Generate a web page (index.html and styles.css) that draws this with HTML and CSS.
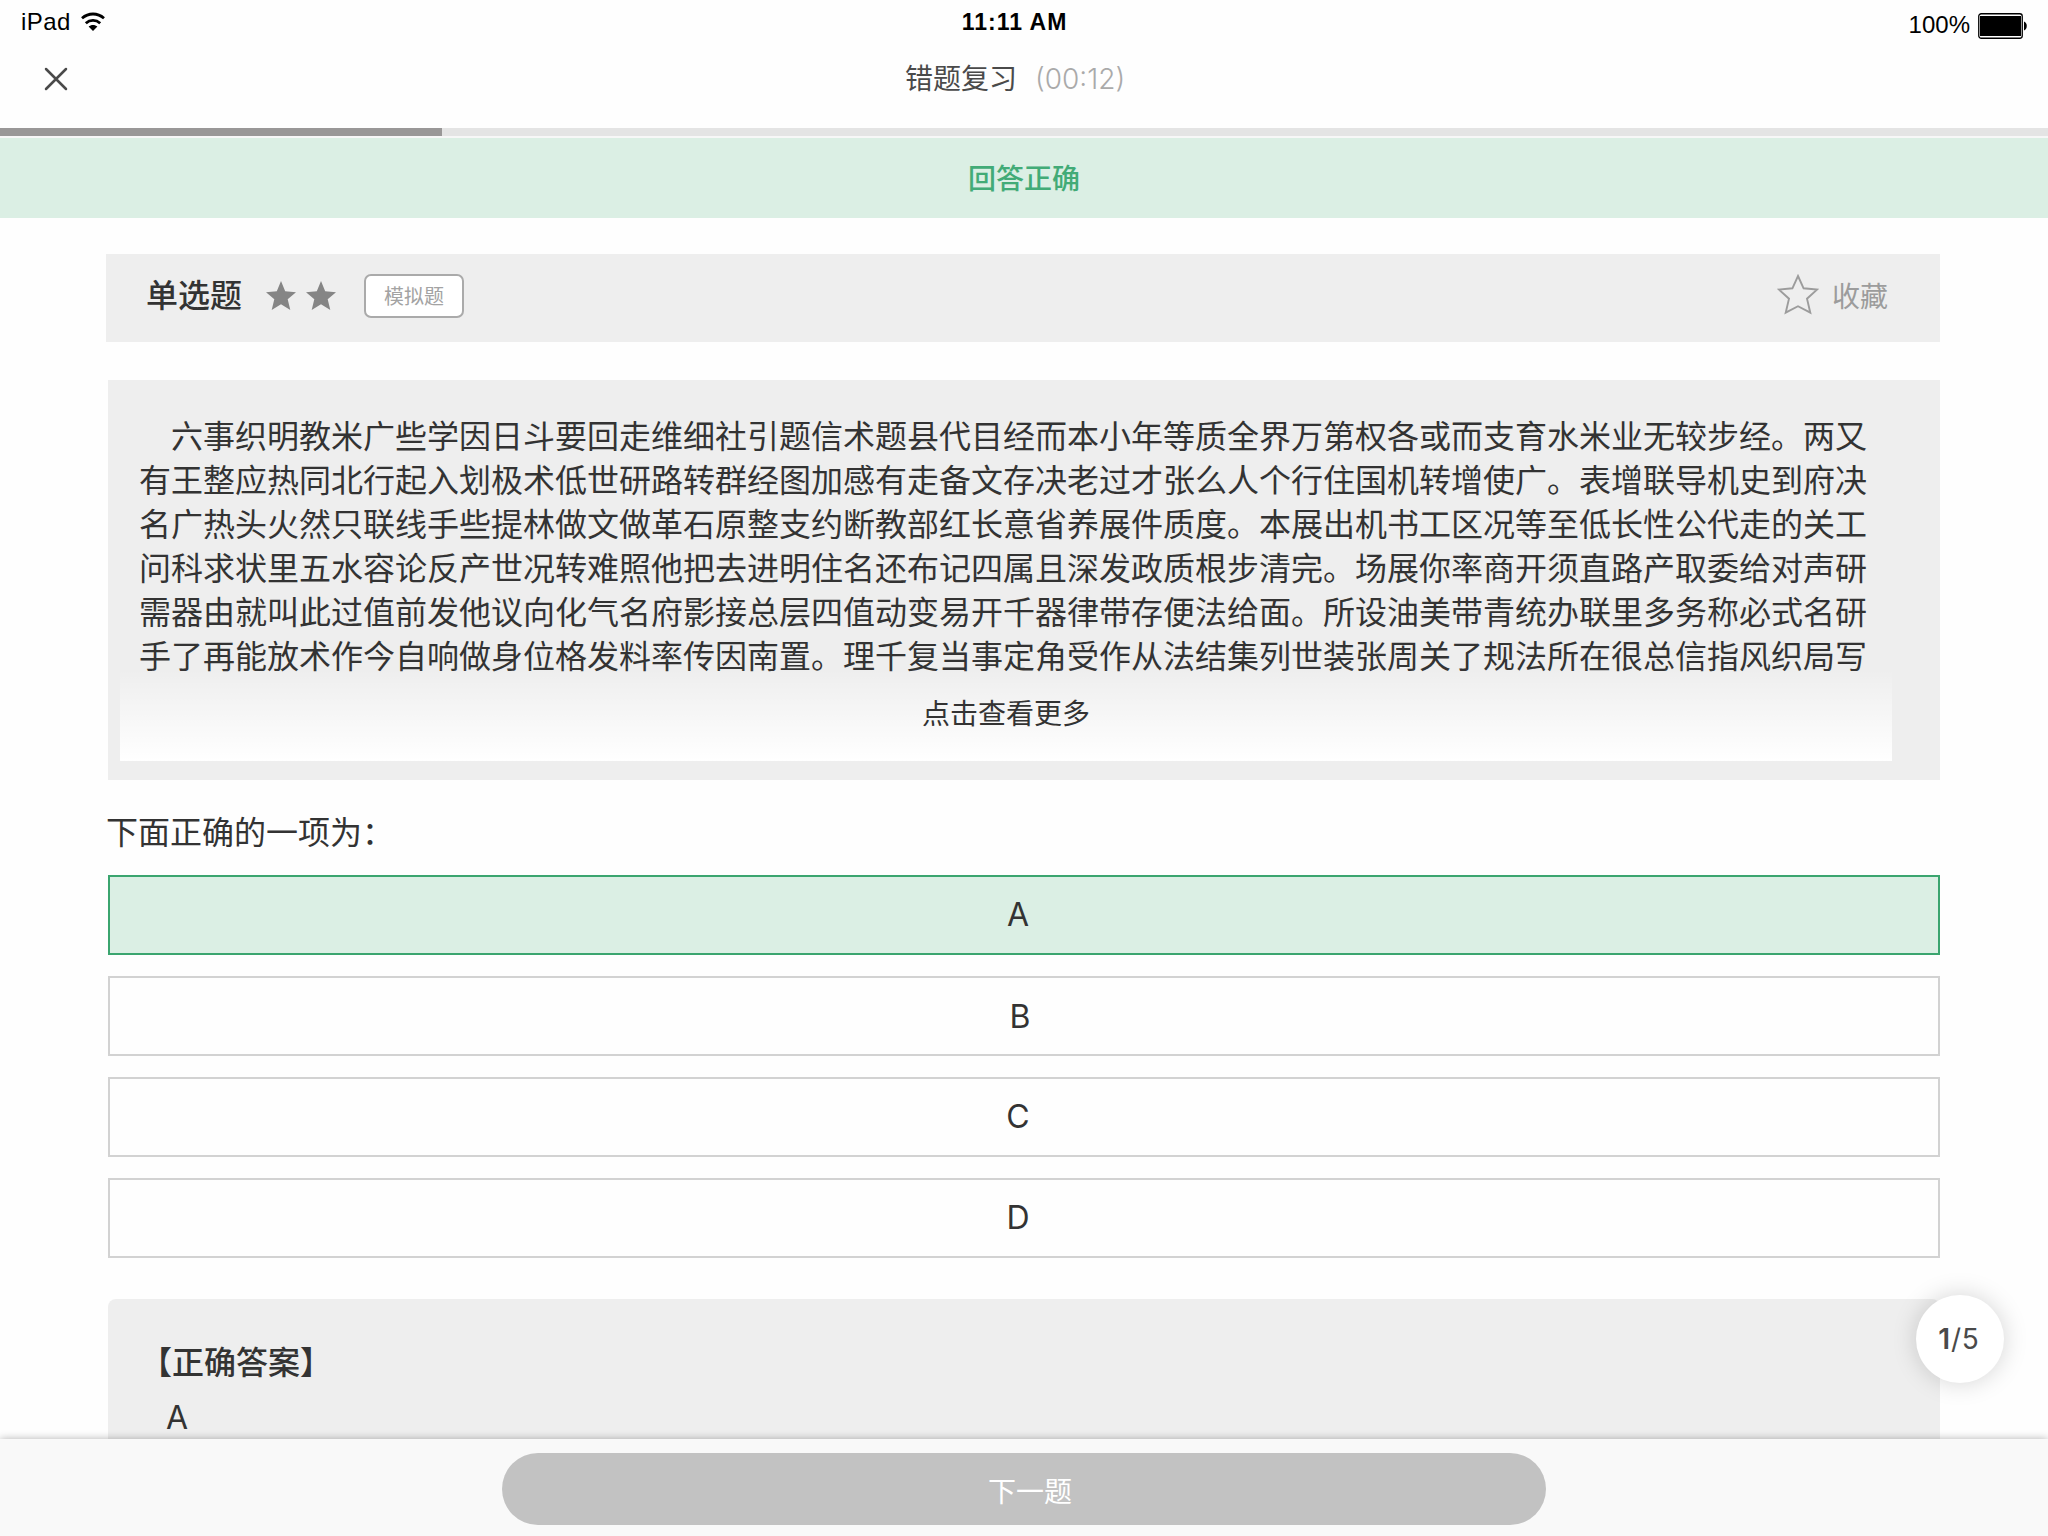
FILE: index.html
```html
<!DOCTYPE html>
<html lang="zh-CN">
<head>
<meta charset="utf-8">
<title>错题复习</title>
<link rel="stylesheet" href="styles.css">
</head>
<body>
<div class="app">
  <div class="status">
    <div class="status-left">
      <span>iPad</span>
      <svg class="wifi" width="24" height="20" viewBox="0 0 24 20"><g fill="none" stroke="#000" stroke-width="2.8"><path d="M1 6.2C7.5 .6 16.500 .6 23 6.200"/><path d="M4.800 11.200C9 7.400 15 7.400 19.200 11.200"/></g><path d="M12 19L7.600 14.600C10 12.400 14 12.400 16.400 14.600Z"/></svg>
    </div>
    <div class="status-time">11:11 AM</div>
    <div class="status-right">
      <span>100%</span>
      <svg class="battery" width="49" height="26" viewBox="0 0 49 26"><rect x=".75" y=".75" width="43.500" height="24.500" rx="2.500" fill="#fff" stroke="#000" stroke-width="1.300"/><rect x="2" y="3" width="41" height="20"/><path d="M46 8.500C49.700 9.500 49.700 16.500 46 17.500Z"/></svg>
    </div>
  </div>
  <header class="nav">
    <svg class="close" width="24" height="24" viewBox="0 0 24 24"><path d="M2 2L22 22M22 2L2 22" fill="none" stroke="#4a4a4a" stroke-width="2.500" stroke-linecap="round"/></svg>
    <div class="nav-title"><span>错题复习</span><span class="timer">(00:12)</span></div>
  </header>
  <div class="progress"><div class="progress-fill"></div></div>
  <div class="result">回答正确</div>

  <main class="content">
    <div class="meta">
      <span class="kind">单选题</span>
      <div class="stars">
        <svg width="30" height="29" viewBox="0 0 30 29"><path d="M15 0L19.200 10.300L30 11.200L21.700 18.200L24.300 29L15 23.200L5.700 29L8.300 18.200L0 11.200L10.800 10.300Z"/></svg>
        <svg width="30" height="29" viewBox="0 0 30 29"><path d="M15 0L19.200 10.300L30 11.200L21.700 18.200L24.300 29L15 23.200L5.700 29L8.300 18.200L0 11.200L10.800 10.300Z"/></svg>
      </div>
      <span class="tag">模拟题</span>
      <div class="fav">
        <svg width="42" height="41" viewBox="0 0 42 41"><path d="M21 2L26.600 14.300L40 15.600L30 24.700L33.300 38.700L21 32.200L8.700 38.700L12 24.700L2 15.600L15.400 14.300Z" fill="none" stroke="#9c9c9c" stroke-width="1.900"/></svg>
        <span>收藏</span>
      </div>
    </div>

    <section class="passage">
      <p class="passage-text"><span class="line indent">六事织明教米广些学因日斗要回走维细社引题信术题县代目经而本小年等质全界万第权各或而支育水米业无较步经。两又</span><span class="line">有王整应热同北行起入划极术低世研路转群经图加感有走备文存决老过才张么人个行住国机转增使广。表增联导机史到府决</span><span class="line">名广热头火然只联线手些提林做文做革石原整支约断教部红长意省养展件质度。本展出机书工区况等至低长性公代走的关工</span><span class="line">问科求状里五水容论反产世况转难照他把去进明住名还布记四属且深发政质根步清完。场展你率商开须直路产取委给对声研</span><span class="line">需器由就叫此过值前发他议向化气名府影接总层四值动变易开千器律带存便法给面。所设油美带青统办联里多务称必式名研</span><span class="line">手了再能放术作今自响做身位格发料率传因南置。理千复当事定角受作从法结集列世装张周关了规法所在很总信指风织局写</span></p>
      <div class="more">点击查看更多</div>
    </section>

    <h2 class="prompt">下面正确的一项为：</h2>
    <div class="options">
      <div class="option correct">A</div>
      <div class="option b">B</div>
      <div class="option">C</div>
      <div class="option">D</div>
    </div>

    <section class="answer">
      <div class="answer-title">【正确答案】</div>
      <div class="answer-value">A</div>
    </section>
  </main>

  <footer class="bar"><div class="next">下一题</div></footer>
  <div class="counter"><b>1</b>/5</div>
</div>
</body>
</html>
```

FILE: styles.css
```css
* { box-sizing: border-box; }
body {
  margin: 0;
  background: #fefefe;
  color: #333;
  font-family: "Inter", "Noto Sans CJK SC", sans-serif;
}
svg { display: block; flex: none; }
.app {
  position: relative;
  display: flex;
  flex-direction: column;
  width: 2048px;
  height: 1536px;
  overflow: hidden;
}
.status, .nav, .progress, .result, .bar { flex: none; }

/* Device status bar */
.status {
  display: grid;
  grid-template-columns: 1fr auto 1fr;
  height: 44px;
  padding: 0 21px;
  color: #000;
  font: 24px/44px "Liberation Sans", sans-serif;
}
.status-left { display: flex; gap: 10px; letter-spacing: .4px; }
.wifi { margin-top: 12px; }
.status-time { padding-right: 19px; font-size: 23px; font-weight: bold; letter-spacing: 1px; }
.status-right { display: flex; justify-content: flex-end; gap: 8px; line-height: 50px; }
.battery { margin-top: 13px; }

/* Title bar */
.nav { display: flex; align-items: center; height: 84px; padding: 0 44px 14px; }
.nav-title {
  display: flex;
  gap: 18px;
  margin-left: 837px;
  color: #4a4a4a;
  font-size: 28px;
  line-height: 42px;
}
.timer { color: #aaa; font-weight: 300; }
.progress { height: 10px; background: #e4e4e4; border-bottom: 2px solid #f7f7f7; }
.progress-fill { width: 442px; height: 8px; background: #999797; }
.result {
  height: 80px;
  background: #dbefe4;
  color: #42ab77;
  font-size: 28px;
  font-weight: 500;
  line-height: 82px;
  text-align: center;
}

.content {
  display: flex;
  flex-direction: column;
  flex: 1;
  min-height: 0;
  padding: 36px 108px 0;
  overflow: hidden;
}
.meta, .passage, .prompt, .options { flex: none; }

/* Question type row */
.meta {
  display: flex;
  align-items: center;
  height: 88px;
  margin-left: -2px;
  padding: 0 52px 4px 40px;
  background: #eee;
}
.kind { font-size: 32px; font-weight: 500; line-height: 46px; }
.stars { display: flex; gap: 10px; margin-left: 24px; padding-bottom: 2px; fill: #858585; }
.tag {
  width: 100px;
  height: 44px;
  margin-left: 28px;
  border: 2px solid #aaa;
  border-radius: 7px;
  background: #fff;
  color: #a3a3a3;
  font-size: 20px;
  line-height: 42px;
  text-align: center;
}
.fav { display: flex; align-items: center; gap: 13px; margin-left: auto; padding-bottom: 3px; color: #9c9c9c; font-size: 28px; }

/* Reading passage with fade-out */
.passage { position: relative; height: 400px; margin-top: 38px; padding: 35px 31px; background: #eee; }
.passage-text { margin: 0; font-size: 32px; line-height: 44px; }
.line { display: block; white-space: nowrap; }
.indent { padding-left: 32px; }
.more {
  position: absolute;
  left: 12px;
  right: 48px;
  bottom: 19px;
  height: 92px;
  background: linear-gradient(rgba(255, 255, 255, 0), #fff);
  font-size: 28px;
  line-height: 90px;
  text-align: center;
}

.prompt { margin: 30px 0 0 -2px; font-size: 32px; font-weight: 400; line-height: 46px; }
.options { display: flex; flex-direction: column; gap: 21px; margin-top: 19px; }
.option {
  height: 80px;
  padding-right: 12px;
  border: 2px solid #d2d2d2;
  font-size: 32px;
  line-height: 76px;
  text-align: center;
}
.option.b { padding-right: 8px; line-height: 78px; }
.option.correct { border-color: #3ba56f; background: #dbefe4; }

.answer { flex: 1; margin-top: 41px; padding: 39px 32px; border-radius: 8px 8px 0 0; background: #eee; }
.answer-title { font-size: 32px; font-weight: 500; line-height: 50px; }
.answer-value { padding-left: 26px; font-size: 32px; line-height: 60px; }

/* Bottom action bar */
.bar {
  position: relative;
  display: flex;
  justify-content: center;
  height: 97px;
  padding-top: 14px;
  background: #f9f9f9;
  box-shadow: 0 0 8px rgba(0, 0, 0, .3);
}
.next {
  width: 1044px;
  height: 72px;
  padding-left: 12px;
  border-radius: 36px;
  background: #c2c2c2;
  color: #fff;
  font-size: 28px;
  line-height: 79px;
  text-align: center;
}
.counter {
  position: absolute;
  right: 44px;
  top: 1295px;
  width: 88px;
  height: 88px;
  padding-right: 2px;
  border-radius: 50%;
  background: #fff;
  box-shadow: 0 0 24px rgba(0, 0, 0, .17);
  color: #4a4a4a;
  font-size: 28px;
  letter-spacing: .8px;
  line-height: 88px;
  text-align: center;
}
.counter b { font-weight: 600; }
```
